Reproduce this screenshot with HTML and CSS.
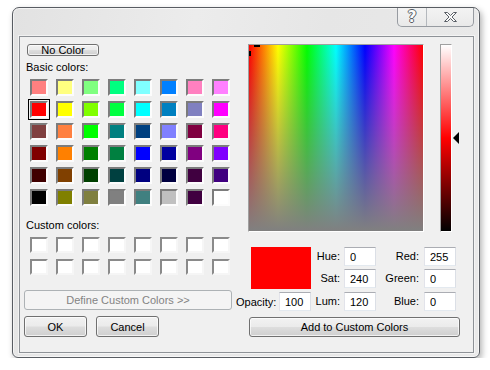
FILE: index.html
```html
<!DOCTYPE html>
<html lang="en">

<head>
    <meta charset="UTF-8">
    <title>Color</title>
    <link rel="stylesheet" href="styles.css">
</head>

<body>

    <div class="window">
        <div class="titlebar">
            <div class="caption">
                <span class="cap-btn help">?</span>
                <span class="cap-btn close">
                    <svg width="15" height="12" viewBox="0 0 15 12">
                        <path d="M1.5 1.5h3l3 3 3-3h3l-4.5 4.5 4.5 4.5h-3l-3-3-3 3h-3l4.5-4.5z"
                            fill="#fbfbfb" stroke="#5a5f66" stroke-width="1" stroke-linejoin="round" />
                    </svg>
                </span>
            </div>
        </div>

        <div class="client">
            <div class="left">
                <button class="btn no-color">No Color</button>
                <div class="label">Basic colors:</div>
                <div class="swatches" id="basic"></div>
                <div class="label custom-label">Custom colors:</div>
                <div class="swatches custom" id="custom"></div>
                <button class="btn define" disabled>Define Custom Colors &gt;&gt;</button>
                <div class="btn-row">
                    <button class="btn dlg">OK</button>
                    <button class="btn dlg">Cancel</button>
                </div>
            </div>

            <div class="right">
                <div class="picker">
                    <div class="spectrum">
                        <span class="cross-h"></span>
                        <span class="cross-v"></span>
                    </div>
                    <div class="lum"></div>
                    <div class="lum-arrow"></div>
                </div>

                <div class="values">
                    <div class="preview"></div>
                    <div class="lbl">Hue:</div>
                    <input class="field" type="text" value="0">
                    <div class="lbl wide">Red:</div>
                    <input class="field" type="text" value="255">

                    <div class="lbl">Sat:</div>
                    <input class="field" type="text" value="240">
                    <div class="lbl wide">Green:</div>
                    <input class="field" type="text" value="0">

                    <div class="opacity">
                        <span>Opacity:</span>
                        <input class="field" type="text" value="100">
                    </div>
                    <div class="lbl">Lum:</div>
                    <input class="field" type="text" value="120">
                    <div class="lbl wide">Blue:</div>
                    <input class="field" type="text" value="0">
                </div>

                <button class="btn add">Add to Custom Colors</button>
            </div>
        </div>
    </div>

    <script>
        const basicColors = [
            '#ff8080', '#ffff80', '#80ff80', '#00ff80', '#80ffff', '#0080ff', '#ff80c0', '#ff80ff',
            '#ff0000', '#ffff00', '#80ff00', '#00ff40', '#00ffff', '#0080c0', '#8080c0', '#ff00ff',
            '#804040', '#ff8040', '#00ff00', '#008080', '#004080', '#8080ff', '#800040', '#ff0080',
            '#800000', '#ff8000', '#008000', '#008040', '#0000ff', '#0000a0', '#800080', '#8000ff',
            '#400000', '#804000', '#004000', '#004040', '#000080', '#000040', '#400040', '#400080',
            '#000000', '#808000', '#808040', '#808080', '#408080', '#c0c0c0', '#400040', '#ffffff'
        ];

        const basic = document.getElementById('basic');
        basicColors.forEach((color, i) => {
            const swatch = document.createElement('div');
            swatch.className = 'swatch';
            if (i === 8) swatch.classList.add('selected'); // current color: red
            swatch.style.background = color;
            basic.appendChild(swatch);
        });

        // 16 empty custom slots
        const custom = document.getElementById('custom');
        for (let i = 0; i < 16; i++) {
            const swatch = document.createElement('div');
            swatch.className = 'swatch';
            custom.appendChild(swatch);
        }
    </script>

</body>

</html>
```

FILE: styles.css
```css
* {
    margin: 0;
    padding: 0;
    box-sizing: border-box;
}

body {
    font-family: "Liberation Sans", Arial, sans-serif;
    font-size: 11px;
    color: #000;
    background-color: #fff;
}

/* window frame */
.window {
    margin: 7px 0 0 12px;
    width: 468px;
    height: 351px;
    display: flex;
    flex-direction: column;
    padding: 0 5px 4px 6px;
    border: 1px solid #585c62;
    border-radius: 7px 7px 6px 6px;
    background: linear-gradient(100deg, #e2e2e2 0%, #ececec 35%, #e6e6e6 60%, #eaeaea 100%);
    box-shadow: inset 0 0 0 1px rgba(255, 255, 255, 0.6), 2px 3px 6px rgba(0, 0, 0, 0.3);
}

.titlebar {
    height: 28px;
    display: flex;
    justify-content: flex-end;
    align-items: flex-start;
}

.caption {
    display: flex;
    height: 19px;
    border: 1px solid #979ba1;
    border-top: 0;
    border-radius: 0 0 5px 5px;
    background: linear-gradient(#f3f3f3, #e9e9e9);
    overflow: hidden;
}

.cap-btn {
    display: flex;
    justify-content: center;
    align-items: center;
}

.help {
    width: 29px;
    border-right: 1px solid #b4b8bd;
    font-family: "DejaVu Sans", sans-serif;
    font-weight: bold;
    font-size: 15px;
    line-height: 15px;
    color: #fbfbfb;
    text-shadow: 1px 0 #5a5f66, -1px 0 #5a5f66, 0 1px #5a5f66, 0 -1px #5a5f66;
}

.close {
    width: 46px;
}

/* client area */
.client {
    flex: 1;
    display: flex;
    border: 1px solid #8e9297;
    background-color: #f0f0f0;
    box-shadow: 0 0 0 1px rgba(255, 255, 255, 0.5);
}

.left {
    width: 216px;
    display: flex;
    flex-direction: column;
    align-items: flex-start;
}

.right {
    width: 236px;
    display: flex;
    flex-direction: column;
    align-items: flex-start;
}

/* buttons */
.btn {
    font: inherit;
    color: #000;
    border: 1px solid #707070;
    border-radius: 3px;
    background: linear-gradient(#f2f2f2 0%, #ebebeb 48%, #dddddd 52%, #cfcfcf 100%);
    box-shadow: inset 0 0 0 1px rgba(255, 255, 255, 0.7);
    text-align: center;
}

.btn:disabled {
    color: #838383;
    border-color: #adb2b5;
    background: #f4f4f4;
    box-shadow: none;
}

.no-color {
    margin: 7px 0 0 7px;
    width: 72px;
    height: 12px;
    line-height: 10px;
    font-size: 11px;
}

.label {
    margin: 5px 0 0 6px;
    line-height: 13px;
}

.custom-label {
    margin-top: 13px;
}

/* swatch grids */
.swatches {
    margin: 5px 0 0 10px;
    display: grid;
    grid-template-columns: repeat(8, 18px);
    grid-auto-rows: 17px;
    column-gap: 8px;
    row-gap: 5px;
}

.swatch {
    border: 2px solid;
    border-color: #7c7c7c #fcfcfc #fcfcfc #7c7c7c;
}

.swatch.selected {
    outline: 1px solid #000;
    outline-offset: 1px;
}

.custom {
    grid-auto-rows: 16px;
    row-gap: 6px;
}

.custom .swatch {
    background: #fff;
    border-color: #8a8a8a #f6f6f6 #f6f6f6 #8a8a8a;
}

.define {
    margin: 15px 0 0 4px;
    width: 208px;
    height: 20px;
}

.btn-row {
    margin: 6px 0 0 4px;
    display: flex;
    gap: 9px;
}

.dlg {
    width: 63px;
    height: 21px;
}

/* spectrum + luminosity */
.picker {
    margin: 7px 0 0 12px;
    display: flex;
    align-items: flex-start;
}

.spectrum {
    position: relative;
    width: 176px;
    height: 188px;
    border: 1px solid;
    border-color: #a0a0a0 #fff #fff #a0a0a0;
    background:
        linear-gradient(to bottom, rgba(128, 128, 128, 0), #808080),
        linear-gradient(to right, #f00, #ff0, #0f0, #0ff, #00f, #f0f, #f00);
}

.cross-h {
    position: absolute;
    left: 5px;
    top: 0;
    width: 6px;
    height: 2px;
    background: #000;
}

.cross-v {
    position: absolute;
    left: 0;
    top: 6px;
    width: 2px;
    height: 5px;
    background: #000;
}

.lum {
    margin-left: 16px;
    width: 12px;
    height: 188px;
    border: 1px solid;
    border-color: #a0a0a0 #fff #fff #a0a0a0;
    background: linear-gradient(to bottom, #fff, #f00 50%, #000);
}

.lum-arrow {
    margin: 88px 0 0 1px;
    width: 0;
    height: 0;
    border-top: 6px solid transparent;
    border-bottom: 6px solid transparent;
    border-right: 6px solid #000;
}

/* value fields */
.values {
    margin-top: 15px;
    display: grid;
    grid-template-columns: 75px 33px 32px 48px 32px;
    grid-template-rows: 19px 20px 19px;
    row-gap: 3px;
}

.preview {
    grid-column: 1;
    grid-row: 1 / 3;
    justify-self: end;
    width: 60px;
    height: 42px;
    background: #f00;
}

.lbl {
    text-align: right;
    padding-right: 4px;
    line-height: 19px;
}

.lbl.wide {
    padding-right: 5px;
}

.opacity {
    display: flex;
    justify-content: space-between;
    align-items: center;
}

.field {
    width: 32px;
    height: 19px;
    font: inherit;
    padding-left: 5px;
    background: #fff;
    border: 1px solid;
    border-color: #abadb3 #dbdfe6 #e3e9ef #e2e3ea;
    outline: none;
}

.add {
    margin: 6px 0 0 13px;
    width: 211px;
    height: 20px;
}
```
